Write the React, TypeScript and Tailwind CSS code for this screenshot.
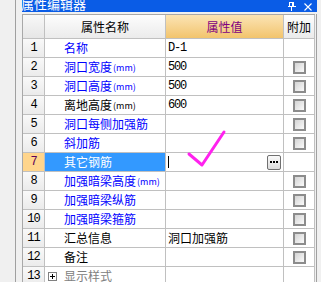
import React from "react";

type Row = {
  n: number;
  name: string;
  unit?: boolean;
  color: "blue" | "black" | "gray" | "sel";
  value?: string;
  cb: boolean;
  editor?: boolean;
  expander?: boolean;
};

const rows: Row[] = [
  { n: 1, name: "名称", color: "blue", value: "D-1", cb: false },
  { n: 2, name: "洞口宽度", unit: true, color: "blue", value: "500", cb: true },
  { n: 3, name: "洞口高度", unit: true, color: "blue", value: "500", cb: true },
  { n: 4, name: "离地高度", unit: true, color: "black", value: "600", cb: true },
  { n: 5, name: "洞口每侧加强筋", color: "blue", cb: true },
  { n: 6, name: "斜加筋", color: "blue", cb: true },
  { n: 7, name: "其它钢筋", color: "sel", cb: false, editor: true },
  { n: 8, name: "加强暗梁高度", unit: true, color: "blue", cb: true },
  { n: 9, name: "加强暗梁纵筋", color: "blue", cb: true },
  { n: 10, name: "加强暗梁箍筋", color: "blue", cb: true },
  { n: 11, name: "汇总信息", color: "black", value: "洞口加强筋", cb: true },
  { n: 12, name: "备注", color: "black", cb: true },
  { n: 13, name: "显示样式", color: "gray", cb: false, expander: true },
];

const cjk = "font-['Noto_Sans_CJK_SC','Noto_Sans',sans-serif]";
const mono = "font-['Liberation_Mono',monospace]";

function Checkbox() {
  return (
    <div className="w-[13px] h-[13px] border-2 border-[#8c8c8c] bg-gradient-to-br from-[#d4d4d4] to-[#fafafa]" />
  );
}

function NameText({ r }: { r: Row }) {
  const color =
    r.color === "blue"
      ? "text-[#0000ff]"
      : r.color === "black"
      ? "text-black"
      : r.color === "gray"
      ? "text-[#808080]"
      : "text-white";
  return (
    <span className={`${color} ${cjk} text-[12px] leading-none whitespace-nowrap flex items-center`}>
      {r.name}
      {r.unit && <span className="text-[9px] ml-[1px]">(mm)</span>}
    </span>
  );
}

export default function App() {
  return (
    <div className="w-[321px] h-[282px] bg-[#f0f0f0] flex overflow-hidden relative">
      <div className="w-[15px] shrink-0" />
      <div className="w-[1px] shrink-0 bg-[#a0a0a0]" />
      <div className="w-[6px] shrink-0" />
      <div className="w-[295px] shrink-0 flex flex-col">
        {/* title bar */}
        <div className="h-[12px] bg-[#0a5ce6] flex items-start overflow-hidden relative shrink-0">
          <span className={`${cjk} text-white text-[13px] leading-[13px] -mt-[3px] -ml-[1px] whitespace-nowrap`}>
            属性编辑器
          </span>
          <div className="ml-auto flex items-start pt-[2px] gap-[8px] pr-[5px]">
            <svg width="8" height="9" viewBox="0 0 8 9" className="block">
              <rect x="1.5" y="0.5" width="4" height="4" fill="none" stroke="white" />
              <rect x="4" y="0" width="2" height="5" fill="white" />
              <rect x="0" y="4" width="8" height="1" fill="white" />
              <rect x="3" y="5" width="1" height="4" fill="white" />
            </svg>
            <svg width="8" height="8" viewBox="0 0 8 8" className="block mt-[1px]">
              <path d="M0.5 0.5 L7.5 7.5 M7.5 0.5 L0.5 7.5" stroke="white" strokeWidth="1.1" />
            </svg>
          </div>
        </div>
        <div className="h-[2px] shrink-0" />
        <div className="flex flex-1 min-h-0">
          {/* table */}
          <div className="w-[293px] shrink-0 border-l border-t border-[#a8a8a8] bg-white flex flex-col">
            {/* header */}
            <div className="flex h-[24px] shrink-0">
              <div className="w-[22px] border-r border-b border-[#c0c0c0] bg-gradient-to-b from-[#f8f8f8] to-[#e6e6e6]" />
              <div className={`w-[121px] border-r border-b border-[#c0c0c0] bg-gradient-to-b from-[#fdfdfd] to-[#ebebeb] flex items-center justify-center ${cjk} text-[12px] text-black`}>
                属性名称
              </div>
              <div className={`w-[118px] border-r border-b border-[#c0c0c0] bg-gradient-to-b from-[#fbe4b4] to-[#f2c46c] flex items-center justify-center ${cjk} text-[12px] text-[#800080]`}>
                属性值
              </div>
              <div className={`w-[31px] border-r border-b border-[#c0c0c0] bg-gradient-to-b from-[#fdfdfd] to-[#ebebeb] flex items-center justify-center ${cjk} text-[12px] text-black`}>
                附加
              </div>
            </div>
            {rows.map((r) => (
              <div key={r.n} className="flex h-[19px] shrink-0">
                <div
                  className={`w-[22px] border-r border-b border-[#c0c0c0] flex items-center justify-center ${mono} text-[12px] tracking-[-1px] ${
                    r.color === "sel"
                      ? "bg-[#ffd58c] text-[#5a005a]"
                      : "bg-gradient-to-b from-[#f9f9f9] to-[#ebebeb] text-black"
                  }`}
                >
                  {r.n}
                </div>
                <div
                  className={`w-[121px] border-r border-b border-[#c0c0c0] flex items-center ${
                    r.color === "sel" ? "bg-[#3399ff]" : "bg-white"
                  } ${r.expander ? "pl-[3px]" : "pl-[19px]"}`}
                >
                  {r.expander && (
                    <div className="w-[9px] h-[9px] border border-[#808080] bg-white flex items-center justify-center mr-[7px] relative">
                      <div className="absolute w-[5px] h-[1px] bg-black" />
                      <div className="absolute w-[1px] h-[5px] bg-black" />
                    </div>
                  )}
                  <NameText r={r} />
                </div>
                <div className="w-[118px] border-r border-b border-[#c0c0c0] flex items-center pl-[2px] bg-white">
                  {r.editor ? (
                    <div className="flex items-center w-full h-full pr-[2px]">
                      <div className="w-[1px] h-[12px] bg-black" />
                      <div className="ml-auto w-[14px] h-[15px] rounded-[2px] border border-[#707070] bg-gradient-to-b from-[#fafafa] to-[#dcdcdc] flex items-center justify-center gap-[1px]">
                        <div className="w-[2px] h-[2px] bg-black" />
                        <div className="w-[2px] h-[2px] bg-black" />
                        <div className="w-[2px] h-[2px] bg-black" />
                      </div>
                    </div>
                  ) : r.value ? (
                    r.value === "洞口加强筋" ? (
                      <span className={`${cjk} text-[12px] text-black`}>{r.value}</span>
                    ) : (
                      <span className={`${mono} text-[12px] tracking-[-1.2px] text-black`}>{r.value}</span>
                    )
                  ) : null}
                </div>
                <div className="w-[31px] border-r border-b border-[#c0c0c0] flex items-center justify-center bg-white">
                  {r.cb && <Checkbox />}
                </div>
              </div>
            ))}
          </div>
          <div className="w-[1px] shrink-0" />
          <div className="w-[1px] shrink-0 bg-[#a0a0a0]" />
        </div>
      </div>
      {/* hand-drawn annotation */}
      <svg className="absolute left-0 top-0 pointer-events-none" width="321" height="282">
        <path
          d="M189 154 L202 165 L224 132"
          fill="none"
          stroke="#ff22ee"
          strokeWidth="3"
          strokeLinecap="round"
          strokeLinejoin="round"
        />
      </svg>
    </div>
  );
}
